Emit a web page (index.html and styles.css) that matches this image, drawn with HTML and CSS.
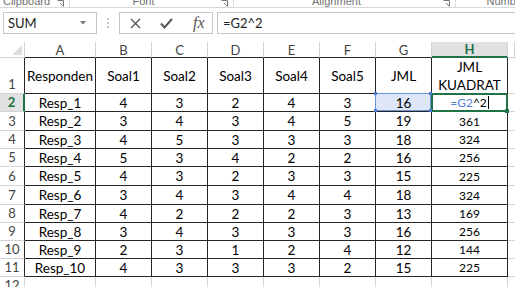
FILE: index.html
```html
<!DOCTYPE html>
<html lang="id">
<head>
    <meta charset="UTF-8">
    <title>Kuadrat JML</title>
    <link rel="stylesheet" href="styles.css">
</head>
<body>
    <div class="ribbon">
        <div class="group g-clip"><span class="label">Clipboard</span><svg class="launch" width="7" height="7" viewBox="0 0 7 7"><path d="M0.5 0.5H6.5V6.5M3 3L6 6" fill="none" stroke="#777"/></svg></div>
        <div class="group g-font"><span class="label">Font</span><svg class="launch" width="7" height="7" viewBox="0 0 7 7"><path d="M0.5 0.5H6.5V6.5M3 3L6 6" fill="none" stroke="#777"/></svg></div>
        <div class="group g-align"><span class="label">Alignment</span><svg class="launch" width="7" height="7" viewBox="0 0 7 7"><path d="M0.5 0.5H6.5V6.5M3 3L6 6" fill="none" stroke="#777"/></svg></div>
        <div class="group g-num"><span class="label">Number</span></div>
    </div>

    <div class="formula-bar">
        <div class="name-box">
            <span>SUM</span>
            <svg width="6" height="4" viewBox="0 0 6 4"><path d="M0 0H6L3 3.5Z" fill="#777"/></svg>
        </div>
        <div class="grip"><i></i><i></i><i></i></div>
        <div class="fx-buttons">
            <svg width="11" height="11" viewBox="0 0 11 11"><path d="M1 1L10 10M10 1L1 10" stroke="#555" stroke-width="1.4"/></svg>
            <svg width="13" height="11" viewBox="0 0 13 11"><path d="M1 5.5L4.5 9.5L12 1" fill="none" stroke="#555" stroke-width="2"/></svg>
            <span class="fx">fx</span>
        </div>
        <div class="formula-input">=G2^2</div>
    </div>

    <div class="sheet">
        <div class="corner"><svg width="10" height="10" viewBox="0 0 10 10"><path d="M10 0V10H0Z" fill="#dcdcdc"/></svg></div>
        <div class="ch">A</div>
        <div class="ch">B</div>
        <div class="ch">C</div>
        <div class="ch">D</div>
        <div class="ch">E</div>
        <div class="ch">F</div>
        <div class="ch">G</div>
        <div class="ch active">H</div>
        <div class="ch out"></div>

        <div class="rh">1</div>
        <div class="cell">Responden</div>
        <div class="cell">Soal1</div>
        <div class="cell">Soal2</div>
        <div class="cell">Soal3</div>
        <div class="cell">Soal4</div>
        <div class="cell">Soal5</div>
        <div class="cell">JML</div>
        <div class="cell two-line">JML<br>KUADRAT</div>
        <div class="cell out"></div>

        <div class="rh active">2</div>
        <div class="cell">Resp_1</div>
        <div class="cell">4</div>
        <div class="cell">3</div>
        <div class="cell">2</div>
        <div class="cell">4</div>
        <div class="cell">3</div>
        <div class="cell ref-cell">16<i class="hd tl"></i><i class="hd tr"></i><i class="hd bl"></i><i class="hd br"></i></div>
        <div class="cell small editing"><span class="eq">=</span><span class="ref">G2</span>^2<span class="caret"></span></div>
        <div class="cell out"></div>

        <div class="rh">3</div>
        <div class="cell">Resp_2</div>
        <div class="cell">3</div>
        <div class="cell">4</div>
        <div class="cell">3</div>
        <div class="cell">4</div>
        <div class="cell">5</div>
        <div class="cell">19</div>
        <div class="cell small">361</div>
        <div class="cell out"></div>

        <div class="rh">4</div>
        <div class="cell">Resp_3</div>
        <div class="cell">4</div>
        <div class="cell">5</div>
        <div class="cell">3</div>
        <div class="cell">3</div>
        <div class="cell">3</div>
        <div class="cell">18</div>
        <div class="cell small">324</div>
        <div class="cell out"></div>

        <div class="rh">5</div>
        <div class="cell">Resp_4</div>
        <div class="cell">5</div>
        <div class="cell">3</div>
        <div class="cell">4</div>
        <div class="cell">2</div>
        <div class="cell">2</div>
        <div class="cell">16</div>
        <div class="cell small">256</div>
        <div class="cell out"></div>

        <div class="rh">6</div>
        <div class="cell">Resp_5</div>
        <div class="cell">4</div>
        <div class="cell">3</div>
        <div class="cell">2</div>
        <div class="cell">3</div>
        <div class="cell">3</div>
        <div class="cell">15</div>
        <div class="cell small">225</div>
        <div class="cell out"></div>

        <div class="rh">7</div>
        <div class="cell">Resp_6</div>
        <div class="cell">3</div>
        <div class="cell">4</div>
        <div class="cell">3</div>
        <div class="cell">4</div>
        <div class="cell">4</div>
        <div class="cell">18</div>
        <div class="cell small">324</div>
        <div class="cell out"></div>

        <div class="rh">8</div>
        <div class="cell">Resp_7</div>
        <div class="cell">4</div>
        <div class="cell">2</div>
        <div class="cell">2</div>
        <div class="cell">2</div>
        <div class="cell">3</div>
        <div class="cell">13</div>
        <div class="cell small">169</div>
        <div class="cell out"></div>

        <div class="rh">9</div>
        <div class="cell">Resp_8</div>
        <div class="cell">3</div>
        <div class="cell">4</div>
        <div class="cell">3</div>
        <div class="cell">3</div>
        <div class="cell">3</div>
        <div class="cell">16</div>
        <div class="cell small">256</div>
        <div class="cell out"></div>

        <div class="rh">10</div>
        <div class="cell">Resp_9</div>
        <div class="cell">2</div>
        <div class="cell">3</div>
        <div class="cell">1</div>
        <div class="cell">2</div>
        <div class="cell">4</div>
        <div class="cell">12</div>
        <div class="cell small">144</div>
        <div class="cell out"></div>

        <div class="rh">11</div>
        <div class="cell">Resp_10</div>
        <div class="cell">4</div>
        <div class="cell">3</div>
        <div class="cell">3</div>
        <div class="cell">3</div>
        <div class="cell">2</div>
        <div class="cell">15</div>
        <div class="cell small">225</div>
        <div class="cell out"></div>

        <div class="rh empty">12</div>
        <div class="cell empty"></div>
        <div class="cell empty"></div>
        <div class="cell empty"></div>
        <div class="cell empty"></div>
        <div class="cell empty"></div>
        <div class="cell empty"></div>
        <div class="cell empty"></div>
        <div class="cell empty"></div>
        <div class="cell out empty"></div>
    </div>
</body>
</html>
```

FILE: styles.css
```css
body {
    margin: 0;
    width: 515px;
    height: 287px;
    overflow: hidden;
    background-color: #fff;
    font-family: Lato, "Liberation Sans", sans-serif;
    color: #000;
}

/* ribbon group labels, cut off at the top */
.ribbon {
    display: flex;
    height: 7px;
    border-bottom: 1px solid #d9d9d9;
    overflow: hidden;
    font-family: "Liberation Sans", Arial, sans-serif;
    font-size: 11px;
    color: #707070;
}
.group {
    display: flex;
    align-items: flex-end;
    flex-shrink: 0;
    border-right: 1px solid #dcdcdc;
}
.group .label {
    flex: 1;
    text-align: center;
    line-height: 12px;
}
.launch {
    margin: 0 5px 0 4px;
    align-self: flex-end;
}
.g-clip { width: 69px; }
.g-font { width: 163px; }
.g-align { width: 221px; }
.g-num { width: 100px; border-right: none; }

/* formula bar */
.formula-bar {
    display: flex;
    height: 22px;
    margin-top: 4px;
    font-size: 13px;
    color: #222;
}
.name-box {
    box-sizing: border-box;
    width: 94px;
    margin-left: 3px;
    border: 1px solid #c6c6c6;
    display: flex;
    align-items: center;
    justify-content: space-between;
    padding: 0 10px 0 4px;
}
.grip {
    width: 22px;
    display: flex;
    flex-direction: column;
    align-items: center;
    justify-content: center;
    gap: 2px;
}
.grip i {
    width: 2px;
    height: 2px;
    background-color: #c8c8c8;
}
.fx-buttons {
    box-sizing: border-box;
    width: 94px;
    border: 1px solid #c6c6c6;
    display: flex;
    align-items: center;
    gap: 19px;
    padding-left: 10px;
}
.fx {
    font-family: "Liberation Serif", serif;
    font-style: italic;
    font-size: 16px;
    color: #555;
    margin-left: 1px;
}
.formula-input {
    flex: 1;
    margin-left: 4px;
    border: 1px solid #c6c6c6;
    border-right: none;
    display: flex;
    align-items: center;
    padding-left: 5px;
}

/* worksheet grid */
.sheet {
    display: grid;
    grid-template-columns: 25px 71px 56px 56px 56px 56px 56px 56px 76px 1fr;
    grid-template-rows: 16px 36px 18px 19px 18px 18px 19px 19px 18px 18px 18px 18px 18px;
    margin-top: 8px;
    font-size: 13.5px;
}
.sheet > div {
    box-sizing: border-box;
    display: flex;
    align-items: center;
    justify-content: center;
    border-right: 1px solid #262626;
    border-bottom: 1px solid #262626;
}
.corner {
    justify-content: flex-end !important;
    align-items: flex-end !important;
    padding: 0 2px 2px 0;
    border-right-color: #d4d4d4 !important;
    border-bottom-color: #d4d4d4 !important;
}
.ch {
    color: #444;
    font-size: 13px;
    border-right-color: #d4d4d4 !important;
}
.ch.active {
    background-color: #e1e1e1;
    color: #217346;
    font-weight: bold;
    border-bottom: 2px solid #217346 !important;
}
.ch.out {
    border-bottom-color: #d4d4d4 !important;
}
.rh {
    color: #444;
    font-size: 13px;
    align-items: flex-end !important;
    padding-bottom: 1px;
    border-bottom-color: #d4d4d4 !important;
}
.rh.active {
    background-color: #e1e1e1;
    color: #217346;
    font-weight: bold;
    border-right: 2px solid #217346 !important;
}
.cell.out {
    border-right: none !important;
    border-bottom-color: #d4d4d4 !important;
}
.empty {
    border-right-color: #d4d4d4 !important;
    border-bottom: none !important;
    align-items: flex-start !important;
}
.rh.empty {
    border-right-color: #d4d4d4 !important;
}
.two-line {
    text-align: center;
    line-height: 18px;
}
.small {
    font-size: 12px;
}

/* cell referenced by the formula */
.ref-cell {
    position: relative;
    background-color: #dde7f7;
}
.ref-cell::after {
    content: "";
    position: absolute;
    inset: -1px 0 0 -1px;
    border: 1px solid #6a92da;
}
.hd {
    position: absolute;
    width: 3px;
    height: 3px;
    background-color: #4a7bd0;
    z-index: 1;
}
.hd.tl { left: -2px; top: -2px; }
.hd.tr { right: -1px; top: -2px; }
.hd.bl { left: -2px; bottom: -1px; }
.hd.br { right: -1px; bottom: -1px; }

/* cell being edited */
.editing {
    position: relative;
}
.editing::after {
    content: "";
    position: absolute;
    inset: -1px -1px -1px -1px;
    border: 2px solid #217346;
}
.editing::before {
    content: "";
    position: absolute;
    right: -2px;
    bottom: -2px;
    width: 4px;
    height: 4px;
    background-color: #217346;
    z-index: 1;
}
.eq {
    color: #5b7fc4;
}
.ref {
    color: #4f7fd6;
}
.caret {
    width: 1px;
    height: 13px;
    margin-left: 1px;
    background-color: #000;
}
```
